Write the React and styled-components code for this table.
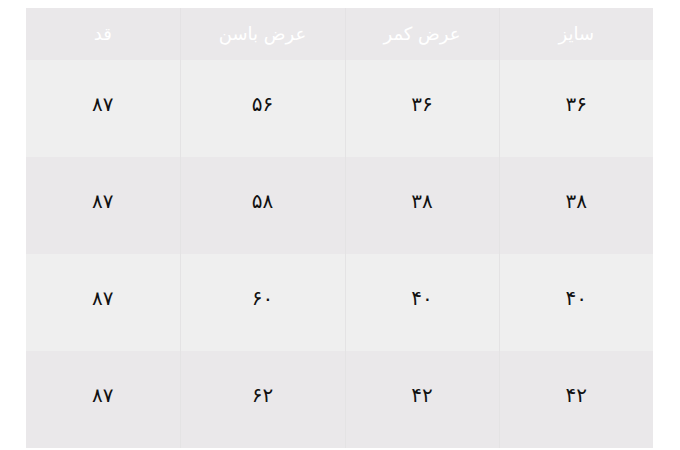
import styled, { createGlobalStyle } from 'styled-components';

const GlobalStyle = createGlobalStyle`
  body {
    margin: 0;
    background: #ffffff;
    font-family: 'DejaVu Sans', 'Noto Sans', sans-serif;
  }
`;

const columns = [
  { title: 'سایز', width: 154 },
  { title: 'عرض کمر', width: 154 },
  { title: 'عرض باسن', width: 165 },
  { title: 'قد', width: 154 },
];

const rows = [
  ['۳۶', '۳۶', '۵۶', '۸۷'],
  ['۳۸', '۳۸', '۵۸', '۸۷'],
  ['۴۰', '۴۰', '۶۰', '۸۷'],
  ['۴۲', '۴۲', '۶۲', '۸۷'],
];

export default function App() {
  return (
    <>
      <GlobalStyle />
      <Page>
        <SizeTable dir="rtl">
          <colgroup>
            {columns.map((c) => (
              <col key={c.title} style={{ width: c.width }} />
            ))}
          </colgroup>
          <thead>
            <tr>
              {columns.map((c) => (
                <HeadCell key={c.title}>{c.title}</HeadCell>
              ))}
            </tr>
          </thead>
          <tbody>
            {rows.map((row, i) => (
              <Row key={i} $alt={i % 2 === 1}>
                {row.map((v, j) => (
                  <Cell key={j}>{v}</Cell>
                ))}
              </Row>
            ))}
          </tbody>
        </SizeTable>
      </Page>
    </>
  );
}

const Page = styled.div`
  padding: 8px 0 0 26px;
`;

const SizeTable = styled.table`
  width: 627px;
  border-collapse: collapse;
  table-layout: fixed;
`;

const HeadCell = styled.th`
  height: 50px;
  padding: 0 0 2px;
  background: #eae8ea;
  color: #ffffff;
  font-size: 18px;
  font-weight: 400;
  text-align: center;
  vertical-align: middle;
  border-left: 1px solid #e4e2e4;
  &:last-child {
    border-left: none;
  }
`;

const Row = styled.tr`
  background: ${(p) => (p.$alt ? '#eae8ea' : '#efefef')};
`;

const Cell = styled.td`
  height: 87px;
  padding: 0 0 10px;
  color: #111111;
  font-size: 20px;
  text-align: center;
  vertical-align: middle;
  border-left: 1px solid #e4e3e4;
  &:last-child {
    border-left: none;
  }
`;
